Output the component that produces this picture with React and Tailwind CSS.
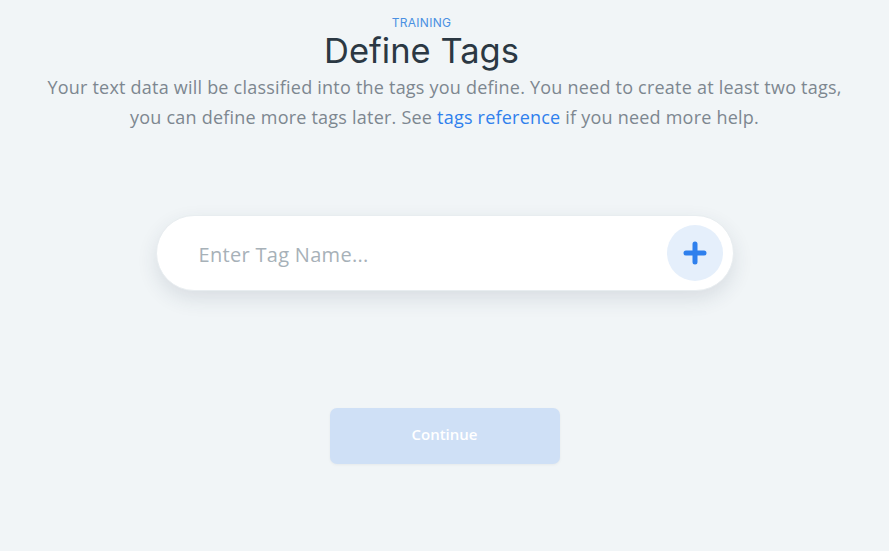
export default function App() {
  return (
    <div className="min-h-[551px] w-full bg-[#f1f5f7] flex flex-col items-center" style={{ fontFamily: "Inter, 'Open Sans', sans-serif" }}>
      <div className="flex flex-col items-center -translate-x-[23px]">
        <div className="mt-[16px] text-[12px] leading-[14px] text-[#4a90e2] tracking-[0.3px]">TRAINING</div>
        <h1 className="mt-[3px] text-[34.5px] leading-[36px] text-[#2b3843] font-normal">Define Tags</h1>
      </div>
      <p className="mt-[3px] text-center text-[18px] leading-[30px] text-[#7d8790] tracking-[0.22px]" style={{ fontFamily: "'Open Sans', sans-serif" }}>
        Your text data will be classified into the tags you define. You need to create at least two tags,
        <br />
        you can define more tags later. See <span className="text-[#2f80ed]">tags reference</span> if you need more help.
      </p>
      <div className="mt-[83px] w-[578px] h-[76px] rounded-full bg-white border border-[#e8edf0] shadow-[0_8px_20px_rgba(40,60,80,0.12)] flex items-center pl-[42px] pr-[10px]">
        <span className="flex-1 pt-[4px] text-[20px] tracking-[0.3px] text-[#a7b1b8]" style={{ fontFamily: "'Open Sans', sans-serif" }}>Enter Tag Name...</span>
        <div className="w-[56px] h-[56px] rounded-full bg-[#e5effb] flex items-center justify-center">
          <svg width="24" height="24" viewBox="0 0 24 24">
            <path d="M12 3v18M3 12h18" stroke="#2f80ed" strokeWidth="5" strokeLinecap="round" />
          </svg>
        </div>
      </div>
      <button className="mt-[117px] w-[230px] h-[56px] pb-[3px] rounded-[7px] bg-[#cfe0f6] text-white text-[15px] font-semibold shadow-[0_1px_3px_rgba(0,0,0,0.05)]" style={{ fontFamily: "'Open Sans', sans-serif" }}>
        Continue
      </button>
    </div>
  );
}
